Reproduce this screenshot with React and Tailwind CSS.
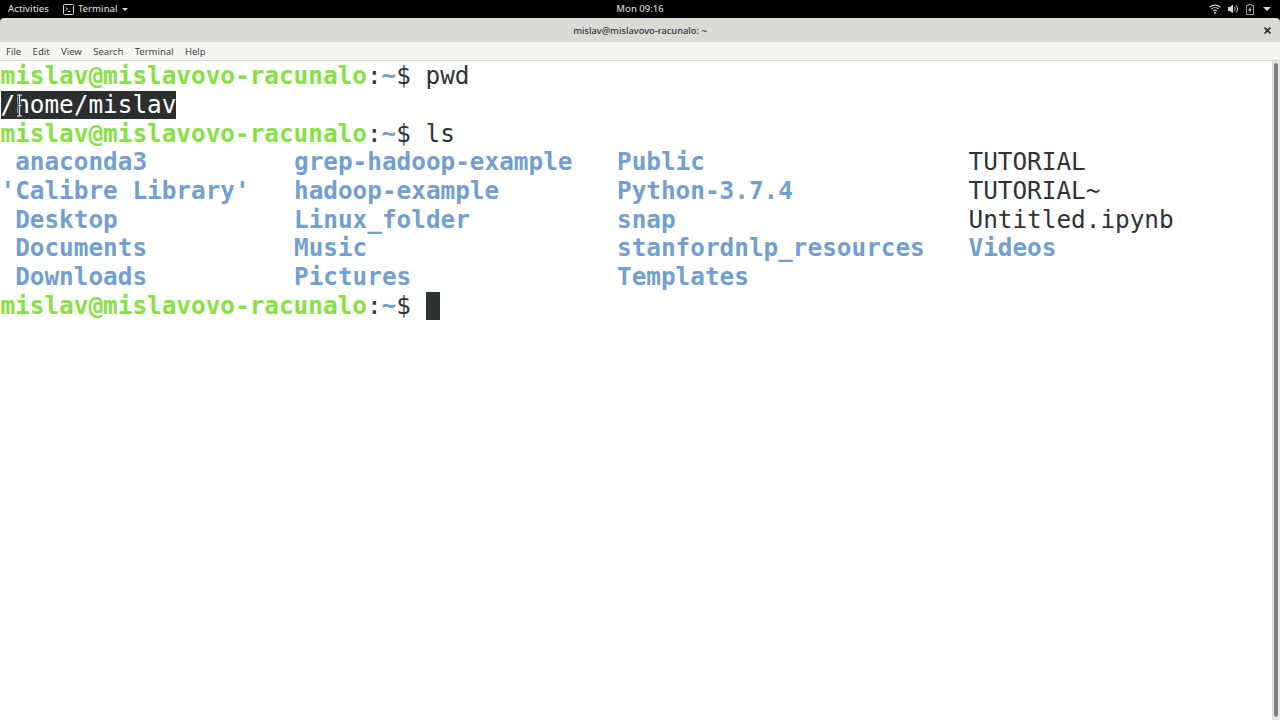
const menuItems = ['File', 'Edit', 'View', 'Search', 'Terminal', 'Help'];

const listing = [
  [' anaconda3', 'grep-hadoop-example', 'Public', 'TUTORIAL'],
  ["'Calibre Library'", 'hadoop-example', 'Python-3.7.4', 'TUTORIAL~'],
  [' Desktop', 'Linux_folder', 'snap', 'Untitled.ipynb'],
  [' Documents', 'Music', 'stanfordnlp_resources', 'Videos'],
  [' Downloads', 'Pictures', 'Templates', ''],
];

const plainFiles = ['TUTORIAL', 'TUTORIAL~', 'Untitled.ipynb'];

function Prompt({ command, cursor }) {
  return (
    <div className="h-[28.67px] whitespace-pre">
      <span className="font-bold text-[#86e144]">mislav@mislavovo-racunalo</span>
      <span className="text-[#2e3436]">:</span>
      <span className="font-bold text-[#729fcf]">~</span>
      <span className="text-[#2e3436]">$ </span>
      {command && <span className="text-[#2e3436]">{command}</span>}
      {cursor && <span className="inline-block h-[28px] w-[14.66px] align-top bg-[#2e3436]" />}
    </div>
  );
}

function ListingRow({ row }) {
  return (
    <div className="grid h-[28.67px] grid-cols-[293.5px_323px_351.5px_1fr] whitespace-pre">
      {row.map((name, i) => (
        <span
          key={i}
          className={plainFiles.includes(name) ? 'font-normal text-[#2e3436]' : 'font-bold text-[#729fcf]'}
        >
          {name}
        </span>
      ))}
    </div>
  );
}

function TerminalIcon() {
  return (
    <svg width="11" height="11" viewBox="0 0 11 11" fill="none" stroke="#d3d7cf">
      <rect x="0.5" y="0.5" width="10" height="10" rx="1" />
      <path d="M2.5 3.5 L4.5 5 L2.5 6.5 M5 7.5 H7.5" strokeWidth="0.9" />
    </svg>
  );
}

function WifiIcon() {
  return (
    <svg width="12" height="10" viewBox="0 0 12 10" fill="none" stroke="#d3d7cf" strokeWidth="1.2">
      <path d="M0.6 3.2 C3.6 0.4 8.4 0.4 11.4 3.2" />
      <path d="M2.4 5 C4.4 3.3 7.6 3.3 9.6 5" />
      <path d="M4.2 6.9 C5.2 6 6.8 6 7.8 6.9" />
      <circle cx="6" cy="8.8" r="1" fill="#d3d7cf" stroke="none" />
    </svg>
  );
}

function VolumeIcon() {
  return (
    <svg width="11" height="10" viewBox="0 0 11 10" fill="none" stroke="#d3d7cf">
      <path d="M0 3 H2 L5 0.5 V9.5 L2 7 H0 Z" fill="#d3d7cf" stroke="none" />
      <path d="M6.5 3 C7.3 4 7.3 6 6.5 7" />
      <path d="M8.2 1.5 C10 3.5 10 6.5 8.2 8.5" />
    </svg>
  );
}

function BatteryIcon() {
  return (
    <svg width="8" height="11" viewBox="0 0 8 11" fill="none" stroke="#d3d7cf" strokeWidth="0.8">
      <path d="M2.5 0.4 H5.5 V1.4 H7.6 V10.6 H0.4 V1.4 H2.5 Z" />
      <path d="M4.8 2.6 L2.2 6.4 H3.8 L3.2 9 L5.8 5.2 H4.2 Z" fill="#d3d7cf" stroke="none" />
    </svg>
  );
}

function IBeam() {
  return (
    <svg width="9" height="23" viewBox="0 0 9 23" fill="none" className="absolute left-[14px] top-[3px]">
      <path d="M2 1 H7 M4.5 1 V22 M2 22 H7 M2 11.5 H7" stroke="#2e3436" strokeWidth="3" />
      <path d="M2 1 H7 M4.5 1 V22 M2 22 H7 M2.5 11.5 H6.5" stroke="#eeeeec" strokeWidth="1.2" />
    </svg>
  );
}

export default function App() {
  return (
    <div className="flex h-[720px] w-[1280px] flex-col overflow-hidden bg-black font-['Noto_Sans',sans-serif]">
      {/* gnome top bar */}
      <div className="grid h-[18px] shrink-0 grid-cols-[1fr_auto_1fr] items-center bg-black px-2 text-[9.5px] font-medium text-[#d3d7cf]">
        <div className="flex items-center">
          <span>Activities</span>
          <div className="ml-[14px] flex items-center gap-[4px]">
            <TerminalIcon />
            <span>Terminal</span>
            <span className="border-x-[3px] border-t-[3px] border-x-transparent border-t-[#d3d7cf]" />
          </div>
        </div>
        <span>Mon 09:16</span>
        <div className="flex items-center justify-end gap-[7px] pr-[1px]">
          <WifiIcon />
          <VolumeIcon />
          <BatteryIcon />
          <span className="ml-[2px] border-x-[4px] border-t-[4px] border-x-transparent border-t-[#d3d7cf]" />
        </div>
      </div>

      {/* title bar */}
      <div className="grid h-[24px] shrink-0 grid-cols-[1fr_auto_1fr] items-center rounded-t-[4px] bg-[#dcdad6] pt-[1px] text-[9.3px] text-[#2e3436]">
        <span />
        <span className="font-medium">mislav@mislavovo-racunalo: ~</span>
        <svg width="7" height="7" viewBox="0 0 7 7" stroke="#2e3436" strokeWidth="1.8" className="mr-[9px] justify-self-end">
          <path d="M0.5 0.5 L6.5 6.5 M6.5 0.5 L0.5 6.5" />
        </svg>
      </div>

      {/* menu bar */}
      <div className="flex h-[19px] shrink-0 items-center gap-[11.4px] border-b border-[#d8d6d2] bg-[#f6f5f2] pl-[6px] pt-[2px] text-[9.5px] text-[#3d4345]">
        {menuItems.map((item) => (
          <span key={item}>{item}</span>
        ))}
      </div>

      {/* terminal */}
      <div className="flex min-h-0 flex-1 bg-white">
        <div className="flex-1 pl-[0.5px] pt-[1.3px] font-['DejaVu_Sans_Mono',monospace] text-[24.35px] leading-[28.67px]">
          <Prompt command="pwd" />
          <div className="relative h-[28.67px] whitespace-pre">
            <span className="inline-block h-[28px] bg-[#2b2f30] text-white">/home/mislav</span>
            <IBeam />
          </div>
          <Prompt command="ls" />
          {listing.map((row) => (
            <ListingRow key={row[0]} row={row} />
          ))}
          <Prompt cursor />
        </div>
        <div className="w-[8px] border-l border-[#dcdad6] bg-[#eceae7] pb-[3px] pl-[1px] pt-[2px]">
          <div className="h-full w-[4px] rounded-[2px] bg-[#7d8080]" />
        </div>
      </div>
    </div>
  );
}
